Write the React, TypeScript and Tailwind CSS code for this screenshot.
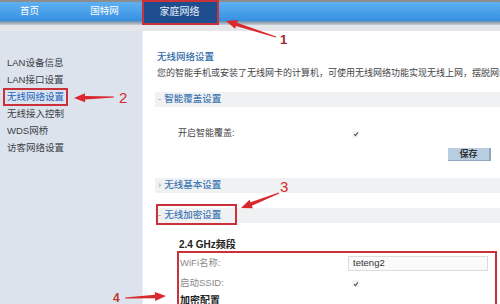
const cjk = { fontFamily: '"Liberation Sans", "Noto Sans CJK SC", sans-serif' };

const sideItems = ['LAN设备信息', 'LAN接口设置', '无线网络设置', '无线接入控制', 'WDS网桥', '访客网络设置'];

function arrowPoints(tail: [number, number], tip: [number, number]) {
  const [x1, y1] = tail;
  const [x2, y2] = tip;
  const len = Math.hypot(x2 - x1, y2 - y1);
  const ux = (x2 - x1) / len;
  const uy = (y2 - y1) / len;
  const nx = -uy;
  const ny = ux;
  const headLen = 11;
  const bx = x2 - ux * headLen;
  const by = y2 - uy * headLen;
  const pts: [number, number][] = [
    [x1 + nx * 0.6, y1 + ny * 0.6],
    [bx + nx * 1.8, by + ny * 1.8],
    [bx + nx * 4.5, by + ny * 4.5],
    [x2, y2],
    [bx - nx * 4.5, by - ny * 4.5],
    [bx - nx * 1.8, by - ny * 1.8],
    [x1 - nx * 0.6, y1 - ny * 0.6],
  ];
  return pts.map((p) => p.join(',')).join(' ');
}

function Check() {
  return (
    <span className="inline-flex h-[7px] w-[7px] items-center justify-center rounded-[1px] bg-[#f4f4f4]">
      <svg width="6" height="6" viewBox="0 0 6 6">
        <path d="M1 3.2 L2.4 4.6 L5 1.4" fill="none" stroke="#555" strokeWidth="1.1" />
      </svg>
    </span>
  );
}

function SectionBand({ label, open }: { label: string; open: boolean }) {
  return (
    <div className="flex h-[15px] items-center bg-[#f0f1f2] pl-[3px] text-[9.5px] font-medium text-[#3f78b4]">
      <span className="mr-[3px] text-[#8a9bb0]">{open ? '-' : '›'}</span>
      {label}
    </div>
  );
}

export default function App() {
  return (
    <div className="relative h-[304px] w-[500px] overflow-hidden bg-white" style={cjk}>
      <div className="h-[2px] bg-[#8d8d8d]" />
      <div className="relative flex h-[19px] bg-gradient-to-b from-[#5eb0f0] to-[#3590e2] text-[9.5px] text-white">
        <div className="-ml-2 flex w-[75px] shrink-0 items-center justify-center">首页</div>
        <div className="flex w-[75px] shrink-0 items-center justify-center">国特网</div>
        <div className="-mt-[2px] flex h-[23px] w-[75px] shrink-0 items-center justify-center bg-[#1f4e8f] text-[10px] text-[#e6eef8]">
          家庭网络
        </div>
      </div>
      <div className="h-[4px] bg-gradient-to-b from-[#6b88a3] to-[#c9d0d7]" />
      <div className="h-[6px] bg-[#e4e6e9]" />

      <div className="flex h-[273px]">
        <aside className="w-[143px] shrink-0 border-r border-[#e9edf2] bg-[#dde3ec] pt-[23px] text-[9.5px] text-[#3a3f47]">
          {sideItems.map((item) => (
            <div
              key={item}
              className={`h-[17px] pl-[7px] leading-[17px] ${item === '无线网络设置' ? 'text-[#1b63c4]' : ''}`}
            >
              {item}
            </div>
          ))}
        </aside>

        <main className="min-w-0 flex-1 overflow-hidden bg-white pl-[12px] pt-[19px]">
          <div className="h-[14px] pl-[2px] text-[9.5px] font-medium leading-[14px] text-[#2f6cab]">无线网络设置</div>
          <div className="mt-[2px] h-[14px] whitespace-nowrap pl-[2px] text-[9px] leading-[14px] text-[#444]">
            您的智能手机或安装了无线网卡的计算机，可使用无线网络功能实现无线上网，摆脱网线的束缚。
          </div>

          <div className="mt-[12px]">
            <SectionBand label="智能覆盖设置" open />
          </div>
          <div className="mt-[19px] flex h-[16px] items-center pl-[23px] text-[9px] text-[#444]">
            <span className="w-[174px]">开启智能覆盖:</span>
            <Check />
          </div>
          <div className="mt-[6px] flex justify-end pr-[9px]">
            <button className="h-[13px] w-[43px] border-r-2 border-b border-[#8fa6bd] bg-[#b9cde1] text-[9px] font-bold leading-[12px] text-[#333]">
              保存
            </button>
          </div>

          <div className="mt-[17px]">
            <SectionBand label="无线基本设置" open={false} />
          </div>
          <div className="mt-[15px]">
            <SectionBand label="无线加密设置" open />
          </div>

          <div className="mt-[16px] h-[12px] pl-[24px] text-[10px] font-bold leading-[12px] text-[#222]">2.4 GHz频段</div>
          <div className="mt-[4px] pl-[25px] text-[9.5px]">
            <div className="flex h-[17px] items-center">
              <span className="w-[168px] text-[#8a8a8a]">WiFi名称:</span>
              <div className="flex h-[15px] w-[140px] items-center border border-[#dcdcdc] bg-[#fafafa] pl-[4px] text-[#333]">
                teteng2
              </div>
            </div>
            <div className="mt-[3px] flex h-[17px] items-center">
              <span className="w-[172px] text-[#8a8a8a]">启动SSID:</span>
              <Check />
            </div>
            <div className="flex h-[16px] items-center text-[10px] font-bold text-[#222]">加密配置</div>
          </div>
        </main>
      </div>

      <svg className="pointer-events-none absolute left-0 top-0" width="500" height="304">
        <g fill="none" stroke="#c9313b" strokeWidth="2">
          <rect x="143" y="1" width="75" height="23" />
          <rect x="4" y="89" width="63" height="16" />
          <rect x="157" y="205" width="79" height="19" />
          <rect x="178" y="252" width="318" height="60" />
        </g>
        <g fill="#d9282e">
          <polygon points={arrowPoints([276, 37], [226, 21])} />
          <polygon points={arrowPoints([114, 97], [74, 98])} />
          <polygon points={arrowPoints([279, 193], [241, 208])} />
          <polygon points={arrowPoints([125, 298], [166, 296])} />
        </g>
      </svg>
      <span className="absolute left-[280px] top-[33px] text-[13px] font-bold leading-none text-[#9e2a2f]">1</span>
      <span className="absolute left-[119px] top-[90px] text-[15px] leading-none text-[#d9282e]">2</span>
      <span className="absolute left-[280px] top-[179px] text-[15px] leading-none text-[#d9282e]">3</span>
      <span className="absolute left-[113px] top-[292px] text-[12px] font-bold leading-none text-[#c0392b]">4</span>
    </div>
  );
}
